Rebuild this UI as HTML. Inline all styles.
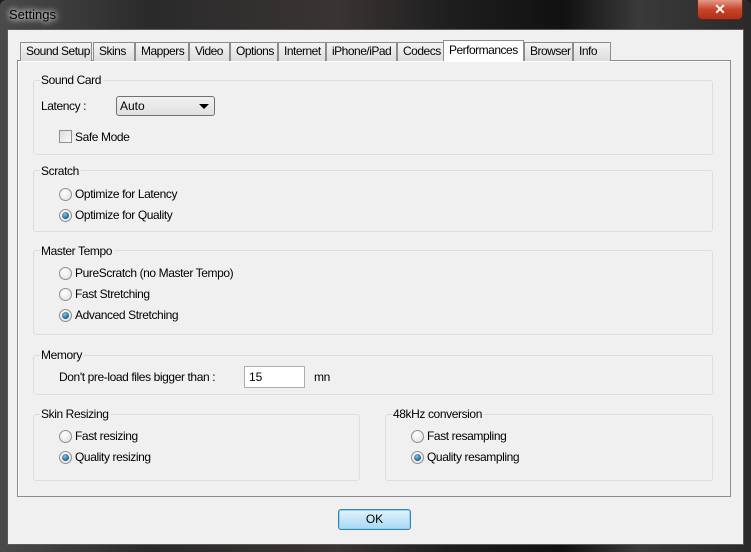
<!DOCTYPE html>
<html><head><meta charset="utf-8"><style>
*{margin:0;padding:0;box-sizing:border-box}
body{width:751px;height:552px;overflow:hidden;background:#1a1a1a;font-family:"Liberation Sans",sans-serif;font-size:12px;color:#000;position:relative}
.a{position:absolute}
.frame{left:0;top:0;width:751px;height:552px;background:linear-gradient(90deg,#4a4a4a 0%,#2a2a2a 20%,#3a3434 45%,#1e1e1e 60%,#111 75%,#3a3a3a 85%,#2a2a2a 100%);border-radius:6px 6px 0 0}
.client{left:7px;top:29px;width:737px;height:516px;background:#f0f0f0;border:1px solid #5a5a5a}
.tab{top:42px;height:19px;background:linear-gradient(#f4f4f4,#dcdcdc);border:1px solid #898c95;border-bottom:none;padding-left:5px;line-height:17px;letter-spacing:-0.5px;white-space:nowrap;overflow:hidden}
.panel{left:17px;top:60px;width:714px;height:437px;border:1px solid #898c95;background:#f0f0f0;box-shadow:inset 1px 1px 0 #fff}
.gb{border:1px solid #d5dfe5;border-radius:3px}
.lg{background:#f0f0f0;padding:0 2px 0 1px;line-height:14px;letter-spacing:-0.4px}
.t{letter-spacing:-0.4px;line-height:14px;white-space:nowrap}
.rd{width:13px;height:13px;border-radius:50%;border:1px solid #8f8f8f;background:radial-gradient(circle at 40% 35%,#fff,#dcdcdc)}
.rd.on::after{content:"";position:absolute;left:2px;top:2px;width:7px;height:7px;border-radius:50%;background:radial-gradient(circle at 40% 35%,#7ec4e8,#1d5f8a 70%)}
</style></head><body>
<div class="a frame"></div>
<div class="a" style="left:9px;top:7px;color:#000;font-size:13px;text-shadow:0 0 6px #fff,0 0 8px #fff">Settings</div>
<div class="a" style="left:697px;top:0;width:46px;height:20px;border:1px solid #5a2a20;border-top:none;border-radius:0 0 5px 5px;background:linear-gradient(#e59a88,#c7432a 50%,#b52f18);color:#fff;text-align:center;font-weight:bold;font-size:14px;line-height:18px">✕</div>
<div class="a client"></div>
<div class="a panel"></div>
<div class="a tab" style="left:20px;width:72px">Sound Setup</div>
<div class="a tab" style="left:93px;width:42px">Skins</div>
<div class="a tab" style="left:135px;width:54px">Mappers</div>
<div class="a tab" style="left:189px;width:41px">Video</div>
<div class="a tab" style="left:230px;width:48px">Options</div>
<div class="a tab" style="left:278px;width:48px">Internet</div>
<div class="a tab" style="left:326px;width:71px">iPhone/iPad</div>
<div class="a tab" style="left:397px;width:47px">Codecs</div>
<div class="a tab" style="left:443px;top:40px;height:21px;width:81px;background:#fff;line-height:19px">Performances</div>
<div class="a tab" style="left:524px;width:49px">Browser</div>
<div class="a tab" style="left:573px;width:38px">Info</div>

<div class="a gb" style="left:33px;top:80px;width:680px;height:75px"></div>
<div class="a lg" style="left:40px;top:73px">Sound Card</div>
<div class="a t" style="left:41px;top:99px">Latency :</div>
<div class="a" style="left:116px;top:96px;width:99px;height:20px;border:1px solid #707070;border-radius:3px;background:linear-gradient(#f2f2f2,#e0e0e0);padding-left:3px;line-height:18px">Auto<span style="position:absolute;right:5px;top:7px;border:4px solid transparent;border-top:5px solid #000;border-bottom:none;width:0;height:0;border-left-width:5px;border-right-width:5px"></span></div>
<div class="a" style="left:59px;top:130px;width:13px;height:13px;border:1px solid #8f8f8f;background:linear-gradient(135deg,#dcdcdc,#fafafa)"></div>
<div class="a t" style="left:75px;top:130px">Safe Mode</div>

<div class="a gb" style="left:33px;top:170px;width:680px;height:62px"></div>
<div class="a lg" style="left:40px;top:164px">Scratch</div>
<div class="a rd" style="left:59px;top:188px"></div><div class="a t" style="left:75px;top:187px">Optimize for Latency</div>
<div class="a rd on" style="left:59px;top:209px"></div><div class="a t" style="left:75px;top:208px">Optimize for Quality</div>

<div class="a gb" style="left:33px;top:250px;width:680px;height:85px"></div>
<div class="a lg" style="left:40px;top:244px">Master Tempo</div>
<div class="a rd" style="left:59px;top:267px"></div><div class="a t" style="left:75px;top:266px">PureScratch (no Master Tempo)</div>
<div class="a rd" style="left:59px;top:288px"></div><div class="a t" style="left:75px;top:287px">Fast Stretching</div>
<div class="a rd on" style="left:59px;top:309px"></div><div class="a t" style="left:75px;top:308px">Advanced Stretching</div>

<div class="a gb" style="left:33px;top:355px;width:680px;height:40px"></div>
<div class="a lg" style="left:40px;top:348px">Memory</div>
<div class="a t" style="left:59px;top:370px">Don't pre-load files bigger than :</div>
<div class="a" style="left:244px;top:366px;width:61px;height:22px;border:1px solid #abadb3;background:#fff;padding-left:4px;line-height:20px">15</div>
<div class="a t" style="left:314px;top:370px">mn</div>

<div class="a gb" style="left:33px;top:414px;width:327px;height:67px"></div>
<div class="a lg" style="left:40px;top:407px">Skin Resizing</div>
<div class="a rd" style="left:59px;top:430px"></div><div class="a t" style="left:75px;top:429px">Fast resizing</div>
<div class="a rd on" style="left:59px;top:451px"></div><div class="a t" style="left:75px;top:450px">Quality resizing</div>

<div class="a gb" style="left:385px;top:414px;width:328px;height:67px"></div>
<div class="a lg" style="left:392px;top:407px">48kHz conversion</div>
<div class="a rd" style="left:411px;top:430px"></div><div class="a t" style="left:427px;top:429px">Fast resampling</div>
<div class="a rd on" style="left:411px;top:451px"></div><div class="a t" style="left:427px;top:450px">Quality resampling</div>

<div class="a" style="left:338px;top:509px;width:73px;height:21px;border:1px solid #3c7fb1;border-radius:3px;background:linear-gradient(#e5f4fc,#c4e5f6 50%,#a7d9f5);box-shadow:inset 0 0 0 1px #8fd4f8;text-align:center;line-height:19px">OK</div>
</body></html>
